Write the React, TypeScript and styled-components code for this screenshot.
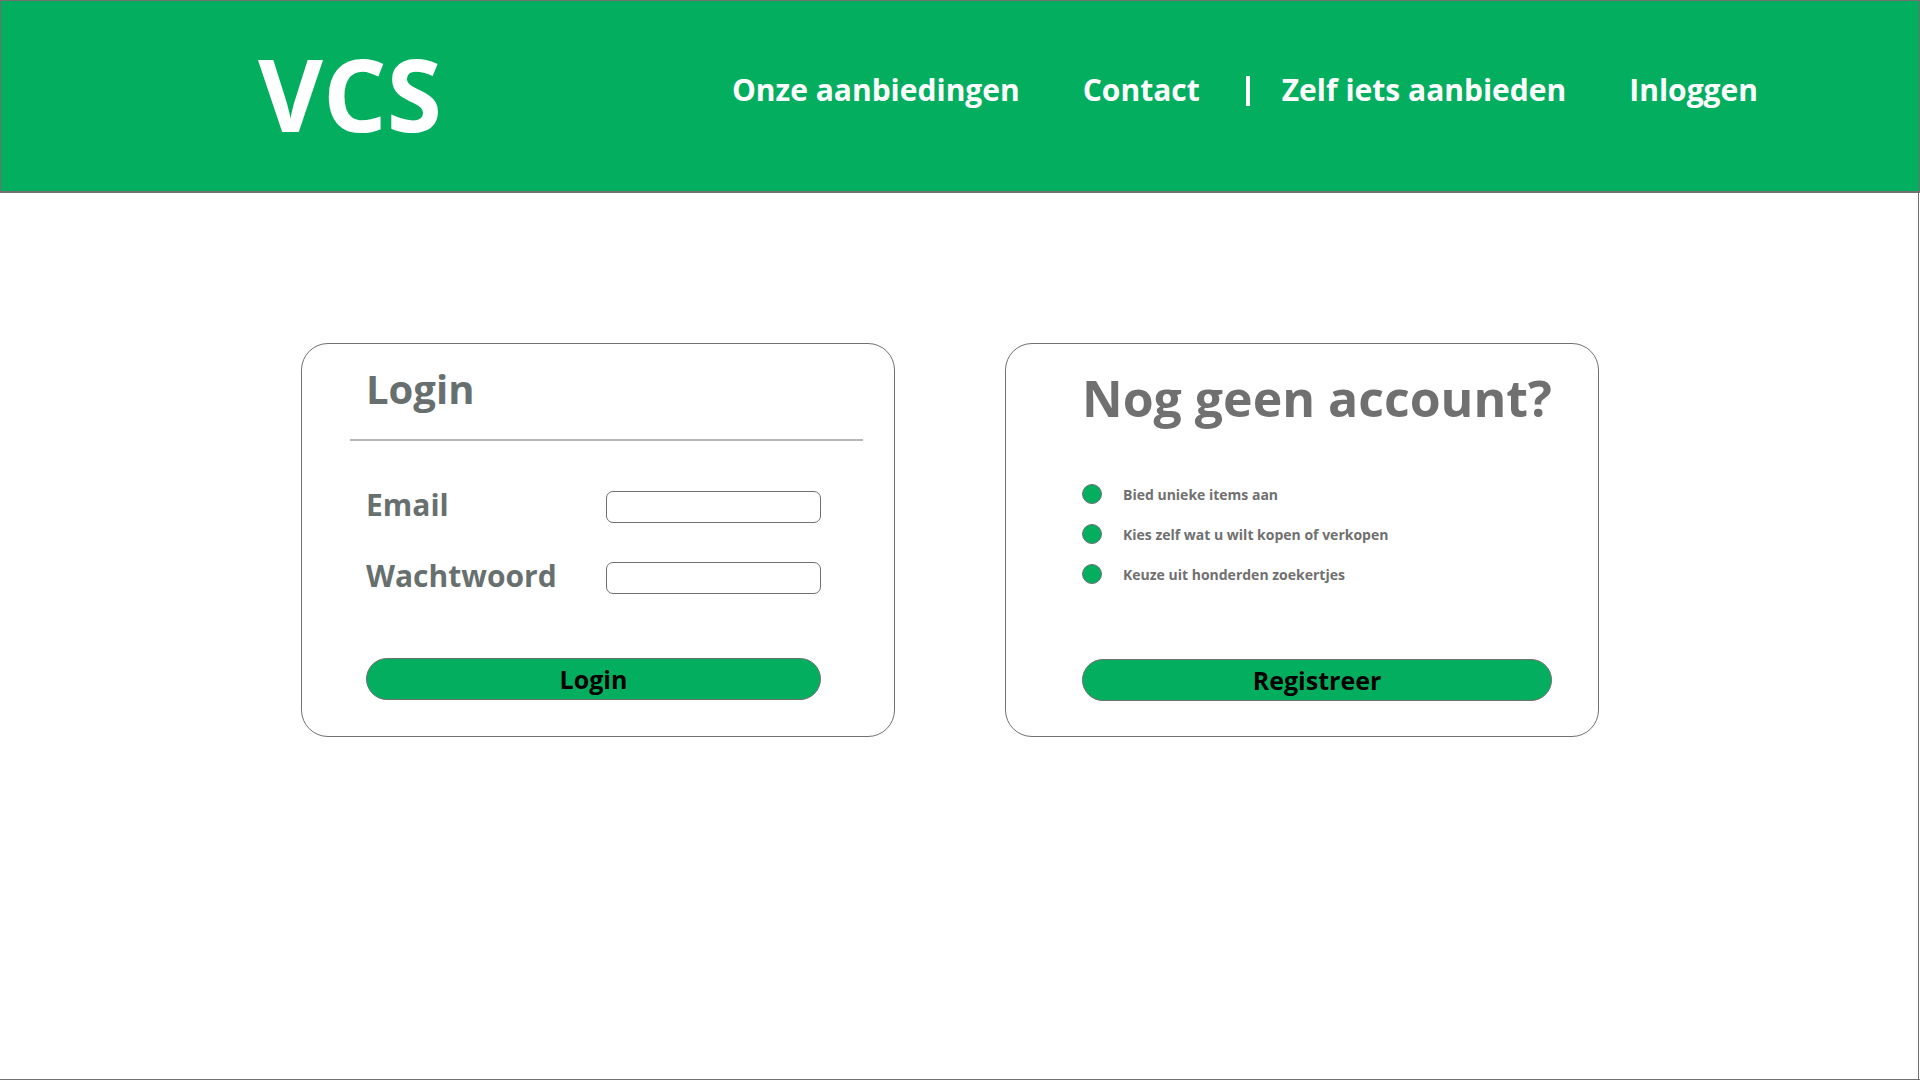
import React from "react";
import styled, { createGlobalStyle } from "styled-components";

const green = "#04ae5f";
const line = "#707070";
const slate = "#68706f";

const GlobalStyle = createGlobalStyle`
  *, *::before, *::after { box-sizing: border-box; }
  body {
    margin: 0;
    background: #fff;
    font-family: "Open Sans", "Noto Sans", sans-serif;
    font-weight: 700;
  }
`;

const Page = styled.div`
  min-height: 100vh;
  display: flex;
  flex-direction: column;
  border-bottom: 1px solid ${line};
`;

const Header = styled.header`
  display: flex;
  align-items: flex-start;
  justify-content: space-between;
  flex-wrap: wrap;
  min-height: 193px;
  padding: 24px 161px 23px 257px;
  background: ${green};
  border: 1px solid ${line};
  border-bottom-width: 2px;
  color: #fff;
  @media (max-width: 1700px) {
    padding-left: 40px;
    padding-right: 40px;
  }
`;

const Brand = styled.a`
  font-size: 100px;
  line-height: 136px;
  color: inherit;
  text-decoration: none;
`;

const Nav = styled.nav`
  display: flex;
  flex-wrap: wrap;
  gap: 63px;
  padding-top: 45px;
`;

const NavGroup = styled.div`
  display: flex;
  align-items: flex-start;
`;

const NavLink = styled.a`
  font-size: 30px;
  line-height: 40px;
  color: inherit;
  text-decoration: none;
  white-space: nowrap;
`;

const NavDivider = styled.span`
  width: 4px;
  height: 30px;
  margin: 6px 32px 0 46px;
  background: #fff;
`;

const Main = styled.main`
  flex: 1;
  display: grid;
  grid-template-columns: 1fr 1fr;
  align-items: start;
  gap: 110px;
  padding: 150px 319px 40px 301px;
  margin-right: 1px;
  border-right: 1px solid ${line};
  @media (max-width: 1700px) {
    grid-template-columns: minmax(0, 594px);
    justify-content: center;
    gap: 40px;
    padding: 60px 40px;
  }
`;

const Card = styled.section`
  display: flex;
  flex-direction: column;
  min-height: 394px;
  border: 1px solid ${line};
  border-radius: 27px;
  background: #fff;
`;

const LoginCard = styled(Card)`
  padding: 18px 31px 36px 48px;
`;

const SignUpCard = styled(Card)`
  padding: 20px 46px 35px 76px;
`;

const LoginTitle = styled.h1`
  margin: 0;
  padding: 0 16px;
  font-size: 40px;
  line-height: 54px;
  color: ${slate};
`;

const Rule = styled.hr`
  width: 100%;
  height: 2px;
  margin: 23px 0 0;
  border: 0;
  background: #b7b7b7;
`;

const Form = styled.form`
  flex: 1;
  display: flex;
  flex-direction: column;
  gap: 35px;
  padding: 46px 42px 0 16px;
`;

const Field = styled.div`
  display: flex;
  align-items: flex-end;
  justify-content: space-between;
`;

const Label = styled.label`
  font-size: 30px;
  line-height: 36px;
  color: ${slate};
`;

const Input = styled.input`
  width: 215px;
  height: 32px;
  padding: 0 8px;
  border: 1px solid ${line};
  border-radius: 7px;
  background: #fff;
  font: inherit;
  font-size: 14px;
`;

const Button = styled.button`
  width: 100%;
  height: 42px;
  margin-top: auto;
  padding: 0;
  border: 1px solid ${line};
  border-radius: 21px;
  background: ${green};
  color: #000;
  font: inherit;
  font-size: 25px;
  line-height: 34px;
  cursor: pointer;
`;

const SignUpTitle = styled.h2`
  margin: 0;
  font-size: 50px;
  line-height: 68px;
  color: ${line};
  white-space: nowrap;
`;

const Benefits = styled.ul`
  display: flex;
  flex-direction: column;
  gap: 18px;
  margin: 52px 0 0;
  padding: 0;
  list-style: none;
`;

const Benefit = styled.li`
  display: flex;
  align-items: flex-start;
  gap: 21px;
  font-size: 14px;
  line-height: 22px;
  color: ${line};
  &::before {
    content: "";
    flex-shrink: 0;
    width: 20px;
    height: 20px;
    border: 1px solid ${line};
    border-radius: 50%;
    background: ${green};
  }
`;

const benefits = [
  "Bied unieke items aan",
  "Kies zelf wat u wilt kopen of verkopen",
  "Keuze uit honderden zoekertjes",
];

export default function App() {
  return (
    <Page>
      <GlobalStyle />
      <Header>
        <Brand href="#">VCS</Brand>
        <Nav>
          <NavLink href="#aanbiedingen">Onze aanbiedingen</NavLink>
          <NavGroup>
            <NavLink href="#contact">Contact</NavLink>
            <NavDivider />
            <NavLink href="#aanbieden">Zelf iets aanbieden</NavLink>
          </NavGroup>
          <NavLink href="#inloggen">Inloggen</NavLink>
        </Nav>
      </Header>
      <Main>
        <LoginCard>
          <LoginTitle>Login</LoginTitle>
          <Rule />
          <Form onSubmit={(e) => e.preventDefault()}>
            <Field>
              <Label htmlFor="email">Email</Label>
              <Input id="email" type="email" />
            </Field>
            <Field>
              <Label htmlFor="password">Wachtwoord</Label>
              <Input id="password" type="password" />
            </Field>
            <Button type="submit">Login</Button>
          </Form>
        </LoginCard>
        <SignUpCard>
          <SignUpTitle>Nog geen account?</SignUpTitle>
          <Benefits>
            {benefits.map((text) => (
              <Benefit key={text}>{text}</Benefit>
            ))}
          </Benefits>
          <Button type="button">Registreer</Button>
        </SignUpCard>
      </Main>
    </Page>
  );
}
